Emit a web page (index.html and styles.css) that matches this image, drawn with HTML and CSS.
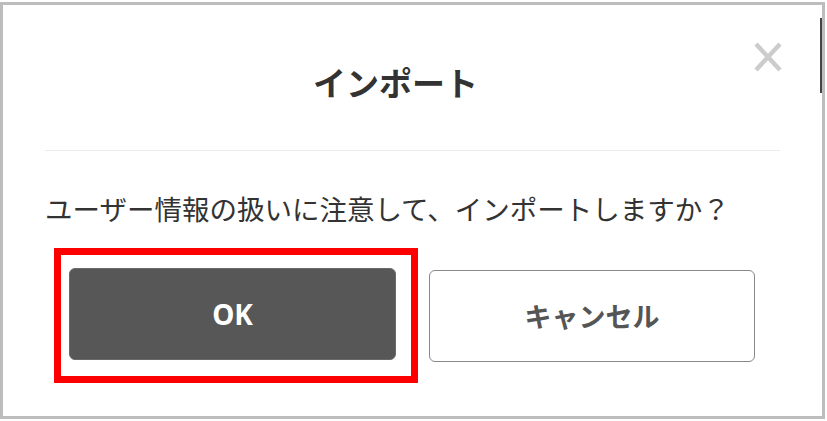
FILE: index.html
```html
<!DOCTYPE html>
<html lang="ja">
<head>
  <meta charset="UTF-8">
  <title>インポート</title>
  <link rel="stylesheet" href="styles.css">
</head>
<body>
  <div class="frame">
    <div class="scroll-mark"></div>

    <div class="dialog">
      <button class="close" aria-label="閉じる">
        <svg width="28" height="30" viewBox="0 0 28 30">
          <path d="M2 2 L26 28 M26 2 L2 28" stroke="#cccccc" stroke-width="4.5" fill="none"/>
        </svg>
      </button>

      <div class="dialog-header">
        <h1>インポート</h1>
      </div>

      <p class="message">ユーザー情報の扱いに注意して、インポートしますか？</p>

      <div class="actions">
        <div class="highlight">
          <button class="btn btn-ok">OK</button>
        </div>
        <button class="btn btn-cancel">キャンセル</button>
      </div>
    </div>
  </div>
</body>
</html>
```

FILE: styles.css
```css
body {
  margin: 0;
  background: #ffffff;
  font-family: "Noto Sans", "Noto Sans CJK JP", sans-serif;
  color: #333333;
}

.frame {
  position: relative;
  box-sizing: border-box;
  width: 825px;
  height: 417px;
  margin: 2px 2px 2px 0;
  border: 3px solid #bdbdbd;
  background: #ffffff;
}

/* dunkler Streifen rechts oben */
.scroll-mark {
  position: absolute;
  right: 0;
  top: 13px;
  width: 2px;
  height: 75px;
  background: #444444;
}

.dialog {
  position: relative;
  height: 100%;
}

.close {
  position: absolute;
  top: 37px;
  right: 40px;
  padding: 0;
  border: none;
  background: none;
  line-height: 0;
  cursor: pointer;
}

.dialog-header {
  margin: 0 42px;
  padding: 59px 34px 46px 0;
  border-bottom: 1px solid #ebebeb;
  text-align: center;
}

.dialog-header h1 {
  margin: 0;
  font-size: 33px;
  line-height: 40px;
  font-weight: 700;
  color: #333333;
}

.message {
  margin: 41px 0 0 42px;
  font-size: 27.5px;
  line-height: 36px;
  color: #333333;
}

.actions {
  display: flex;
  align-items: center;
  gap: 11px;
  margin: 20px 0 0 51px;
}

.highlight {
  border: 7px solid #ff0000;
  padding: 13px 15px 16px 8px;
}

.btn {
  box-sizing: border-box;
  width: 327px;
  height: 92px;
  border-radius: 6px;
  font-family: "Noto Sans", "Noto Sans CJK JP", sans-serif;
  font-weight: 700;
  cursor: pointer;
}

.btn-ok {
  display: block;
  border: 1px solid #6a6a6a;
  background: #575757;
  color: #ffffff;
  font-size: 28px;
}

.btn-cancel {
  width: 326px;
  border: 1px solid #888888;
  background: #ffffff;
  color: #555555;
  font-size: 27px;
}
```
